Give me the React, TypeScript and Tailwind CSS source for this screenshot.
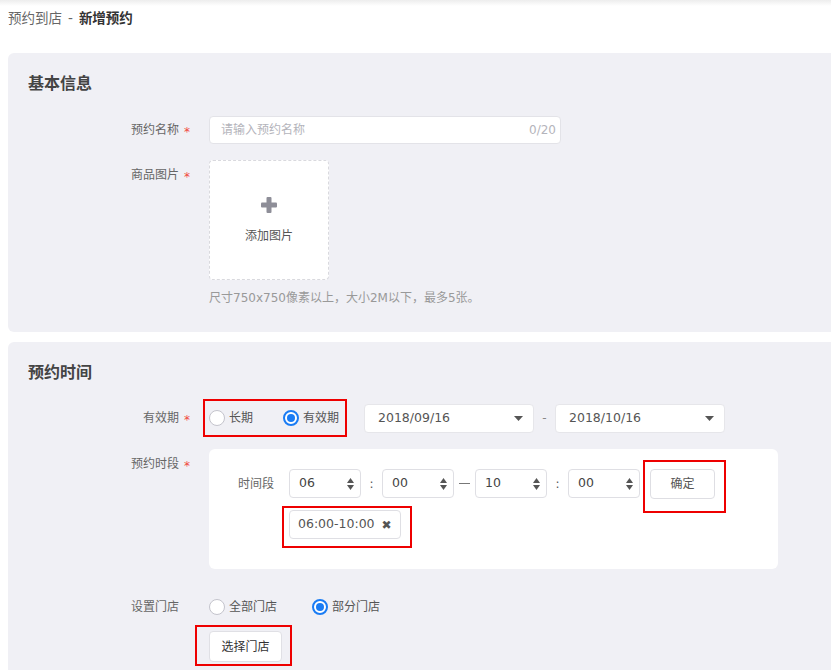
import React from 'react'

const FONT = "font-['DejaVu_Sans','Noto_Sans_CJK_SC',sans-serif]"

function Label({ text, required, className = '' }: { text: string; required?: boolean; className?: string }) {
  return (
    <div className={`w-[201px] shrink-0 flex text-[12px] text-[#666] ${className}`}>
      <span className="w-[171px] text-right">{text}</span>
      {required && <span className="relative top-[2px] ml-[5px] text-[#f0483e]">*</span>}
    </div>
  )
}

function Radio({ label, checked }: { label: string; checked?: boolean }) {
  return (
    <label className="flex items-center gap-1 text-[12px] text-[#555]">
      {checked ? (
        <span className="w-4 h-4 rounded-full border-2 border-[#1a7cf4] bg-white flex items-center justify-center">
          <span className="w-2 h-2 rounded-full bg-[#1a7cf4]" />
        </span>
      ) : (
        <span className="w-4 h-4 rounded-full border border-[#c4c4cc] bg-white" />
      )}
      {label}
    </label>
  )
}

function DateSelect({ value }: { value: string }) {
  return (
    <div className="w-[170px] h-[29px] rounded-[4px] border border-[#e6e6ea] bg-white flex items-center justify-between pl-[13px] pr-[10px] text-[12.5px] text-[#555]">
      <span>{value}</span>
      <svg width="9" height="5" viewBox="0 0 9 5"><polygon points="0,0 9,0 4.5,5" fill="#555" /></svg>
    </div>
  )
}

function NumberBox({ value }: { value: string }) {
  return (
    <div className="w-[72px] h-[29px] rounded-[4px] border border-[#dfdfe4] bg-white flex items-center justify-between pl-[9px] pr-[6px] text-[12.5px] text-[#444]">
      <span>{value}</span>
      <svg width="7" height="12" viewBox="0 0 7 12">
        <polygon points="3.5,0 7,5 0,5" fill="#555" />
        <polygon points="0,7 7,7 3.5,12" fill="#555" />
      </svg>
    </div>
  )
}

function RedBox({ className }: { className: string }) {
  return <span className={`absolute border-2 border-[#ee0000] pointer-events-none ${className}`} />
}

export default function App() {
  return (
    <div className={`w-[831px] h-[670px] overflow-hidden bg-white ${FONT}`}>
      <div className="h-[6px] bg-gradient-to-b from-[#ededed] to-white" />
      <div className="h-[47px] px-2 pt-[2px] text-[13.5px] leading-[20px] text-[#666]">
        预约到店<span className="mx-[6px]">-</span><span className="font-semibold text-[#333]">新增预约</span>
      </div>

      {/* 基本信息 */}
      <section className="ml-2 w-[840px] rounded-[6px] bg-[#f0f0f5] pt-[20px] pb-[25px]">
        <h2 className="pl-5 text-[16px] leading-[22px] font-semibold text-[#444]">基本信息</h2>

        <div className="mt-[21px] flex items-center">
          <Label text="预约名称" required />
          <div className="w-[352px] h-[28px] rounded-[4px] border border-[#e3e3e8] bg-white flex items-center justify-between pl-[11px] pr-[4px] text-[12px] text-[#b4b4bb]">
            <span>请输入预约名称</span>
            <span>0/20</span>
          </div>
        </div>

        <div className="mt-4 flex items-start">
          <Label text="商品图片" required className="leading-[30px]" />
          <div className="w-[120px] h-[120px] rounded-[4px] border border-dashed border-[#d9d9de] bg-white flex flex-col items-center pt-[36px]">
            <svg width="16" height="16" viewBox="0 0 16 16">
              <rect x="5.5" y="0" width="5" height="16" rx="1" fill="#8e8e98" />
              <rect x="0" y="5.5" width="16" height="5" rx="1" fill="#8e8e98" />
            </svg>
            <span className="mt-[14px] text-[12px] leading-[18px] text-[#555]">添加图片</span>
          </div>
        </div>

        <p className="mt-[9px] pl-[201px] text-[12px] leading-[18px] text-[#999]">
          尺寸750x750像素以上，大小2M以下，最多5张。
        </p>
      </section>

      {/* 预约时间 */}
      <section className="mt-[10px] ml-2 w-[840px] h-[400px] rounded-[6px] bg-[#f0f0f5] pt-[20px]">
        <h2 className="pl-5 text-[16px] leading-[22px] font-semibold text-[#444]">预约时间</h2>

        <div className="mt-[15px] h-[38px] flex items-center">
          <Label text="有效期" required />
          <div className="-ml-[6px] h-[38px] w-[144px] border-2 border-[#ee0000] flex items-center pl-1">
            <Radio label="长期" />
            <span className="w-[30px]" />
            <Radio label="有效期" checked />
          </div>
          <div className="ml-[17px] flex items-center">
            <DateSelect value="2018/09/16" />
            <span className="w-[21px] text-center text-[12px] text-[#888]">-</span>
            <DateSelect value="2018/10/16" />
          </div>
        </div>

        <div className="mt-3 flex items-start">
          <Label text="预约时段" required className="leading-[31px]" />
          <div className="w-[569px] h-[120px] rounded-[6px] bg-white pl-[29px] pt-[20px]">
            <div className="flex items-center h-[29px]">
              <span className="w-[51px] text-[12px] text-[#666]">时间段</span>
              <NumberBox value="06" />
              <span className="w-[21px] text-center text-[12px] text-[#555]">:</span>
              <NumberBox value="00" />
              <span className="w-[21px] flex justify-center"><span className="w-[11px] h-[1.5px] bg-[#777]" /></span>
              <NumberBox value="10" />
              <span className="w-[21px] text-center text-[12px] text-[#555]">:</span>
              <NumberBox value="00" />
              <div className="relative ml-[10px]">
                <button className="w-[65px] h-[30px] rounded-[4px] border border-[#dedee3] bg-white text-[12px] text-[#555]">确定</button>
                <RedBox className="-left-[7px] -top-[9px] -right-[11px] -bottom-[14px]" />
              </div>
            </div>
            <div className="mt-3 ml-[51px] flex">
              <div className="relative">
                <div className="h-[29px] rounded-[4px] border border-[#dfdfe4] bg-white flex items-center gap-[7px] pl-[8px] pr-[8px] text-[12.5px] text-[#555]">
                  <span>06:00-10:00</span>
                  <span className="text-[12px] text-[#555]">✖</span>
                </div>
                <RedBox className="-left-[7px] -top-[4px] -right-[11px] -bottom-[9px]" />
              </div>
            </div>
          </div>
        </div>

        <div className="mt-[28px] h-[20px] flex items-center">
          <Label text="设置门店" />
          <Radio label="全部门店" />
          <span className="w-[35px]" />
          <Radio label="部分门店" checked />
        </div>

        <div className="mt-[14px] ml-[201px] flex">
          <div className="relative">
            <button className="w-[73px] h-[31px] rounded-[4px] border border-[#e0e0e5] bg-white text-[12px] text-[#333]">选择门店</button>
            <RedBox className="-left-[14px] -top-[6px] -right-[10px] -bottom-[4px]" />
          </div>
        </div>
      </section>
    </div>
  )
}
